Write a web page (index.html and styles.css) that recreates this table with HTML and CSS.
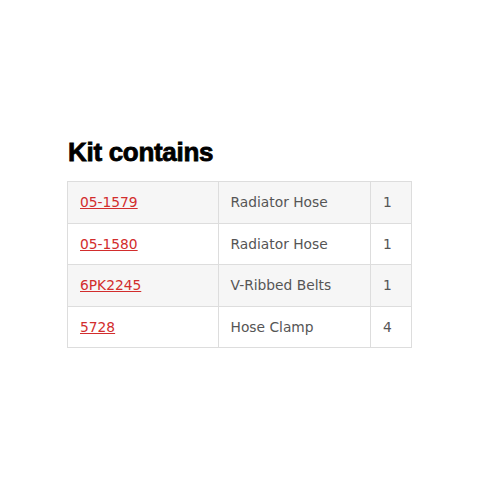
FILE: index.html
```html
<!DOCTYPE html>
<html>
<head>
<meta charset="utf-8">
<link rel="stylesheet" href="styles.css">
</head>
<body>
<div class="page">
  <h2 class="title">Kit contains</h2>
  <table class="kit">
    <tr class="shade"><td class="c1"><a href="#">05-1579</a></td><td class="c2">Radiator Hose</td><td class="c3">1</td></tr>
    <tr><td class="c1"><a href="#">05-1580</a></td><td class="c2">Radiator Hose</td><td class="c3">1</td></tr>
    <tr class="shade"><td class="c1"><a href="#">6PK2245</a></td><td class="c2">V-Ribbed Belts</td><td class="c3">1</td></tr>
    <tr><td class="c1"><a href="#">5728</a></td><td class="c2">Hose Clamp</td><td class="c3">4</td></tr>
  </table>
</div>
</body>
</html>
```
FILE: styles.css
```css
html, body { margin: 0; padding: 0; background: #fff; }
.page { padding: 136px 0 0 67px; }
.title {
  margin: 0 0 13px 1px;
  font-family: "Liberation Sans", Arial, sans-serif;
  font-weight: 900;
  font-size: 26px;
  line-height: 32px;
  color: #000;
  letter-spacing: -0.3px;
  -webkit-text-stroke: 0.8px #000;
}
.kit {
  border-collapse: collapse;
  width: 345px;
  font-family: "DejaVu Sans", Verdana, sans-serif;
  font-size: 13.8px;
  color: #555;
}
.kit td {
  border: 1px solid #ddd;
  height: 41.5px;
  padding: 0 12px;
  box-sizing: border-box;
}
.kit .c1 { width: 151px; }
.kit .c2 { width: 153px; }
.kit .c3 { width: 41px; }
.kit tr.shade td { background: #f6f6f6; }
.kit a { color: #d22d2d; text-decoration: underline; }
```
